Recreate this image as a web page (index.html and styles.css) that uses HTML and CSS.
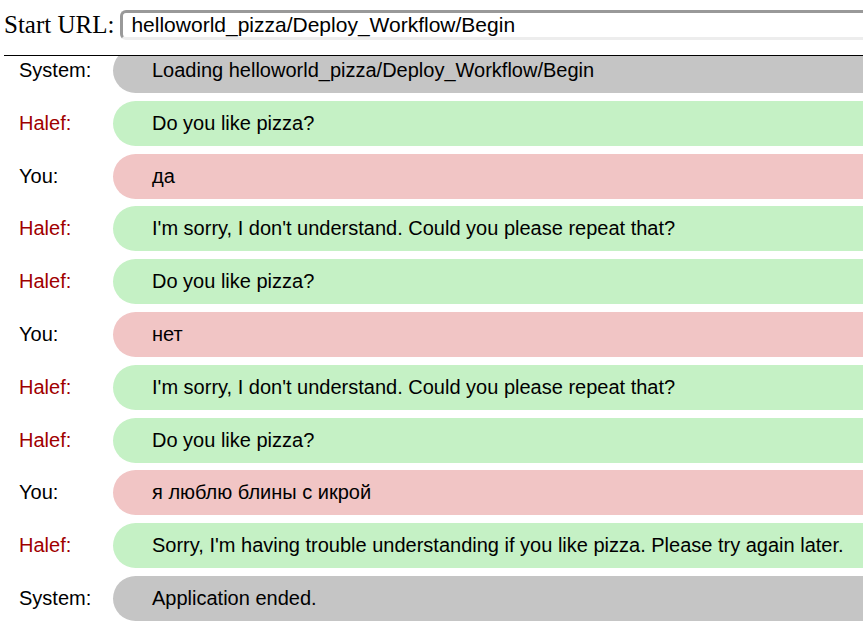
FILE: index.html
```html
<!DOCTYPE html>
<html lang="en">
<head>
<meta charset="utf-8">
<title>Halef</title>
<link rel="stylesheet" href="styles.css">
</head>
<body>
<form class="bar">
<label for="url">Start URL:</label>
<input id="url" class="url" type="text" value="helloworld_pizza/Deploy_Workflow/Begin">
</form>
<main class="log">
<div class="row system"><span class="who">System:</span><p class="msg">Loading helloworld_pizza/Deploy_Workflow/Begin</p></div>
<div class="row halef"><span class="who">Halef:</span><p class="msg">Do you like pizza?</p></div>
<div class="row you"><span class="who">You:</span><p class="msg">да</p></div>
<div class="row halef"><span class="who">Halef:</span><p class="msg">I'm sorry, I don't understand. Could you please repeat that?</p></div>
<div class="row halef"><span class="who">Halef:</span><p class="msg">Do you like pizza?</p></div>
<div class="row you"><span class="who">You:</span><p class="msg">нет</p></div>
<div class="row halef"><span class="who">Halef:</span><p class="msg">I'm sorry, I don't understand. Could you please repeat that?</p></div>
<div class="row halef"><span class="who">Halef:</span><p class="msg">Do you like pizza?</p></div>
<div class="row you"><span class="who">You:</span><p class="msg">я люблю блины с икрой</p></div>
<div class="row halef"><span class="who">Halef:</span><p class="msg">Sorry, I'm having trouble understanding if you like pizza. Please try again later.</p></div>
<div class="row system"><span class="who">System:</span><p class="msg">Application ended.</p></div>
</main>
</body>
</html>
```
FILE: styles.css
```css
* { box-sizing: border-box; }
body {
  display: flex;
  flex-direction: column;
  margin: 0;
  min-height: 100vh;
  background: #fff;
  color: #000;
  font-family: "Liberation Sans", Arial, sans-serif;
  font-size: 20px;
}
.bar {
  display: flex;
  align-items: center;
  gap: 6px;
  margin-left: 4px;
  padding: 10px 0 15px;
  border-bottom: 1px solid #000;
  font-family: "Liberation Serif", "Times New Roman", serif;
  font-size: 25px;
  line-height: 28px;
}
.url {
  flex: 1;
  min-width: 0;
  height: 30px;
  padding: 0 8px;
  border: 3px solid #ededed;
  border-top-color: #999;
  border-left-color: #999;
  border-right: 0;
  border-radius: 6px 0 0 6px;
  background: #fff;
  color: #000;
  font-family: "Liberation Sans", Arial, sans-serif;
  font-size: 21px;
  outline: none;
}
.log {
  flex: 1;
  display: flex;
  flex-direction: column;
  justify-content: space-between;
  padding-bottom: 4px;
  overflow: hidden;
}
.row {
  display: flex;
  align-items: center;
  line-height: 45px;
}
.row:first-child { margin-top: -8px; }
.who {
  flex: 0 0 113px;
  padding-left: 19px;
}
.halef .who { color: #a00000; }
.msg {
  flex: 1;
  margin: 0;
  padding-left: 39px;
  border-radius: 23px 0 0 23px;
  white-space: nowrap;
}
.system .msg { background: #c5c5c5; }
.halef .msg { background: #c5f1c5; }
.you .msg { background: #f1c5c5; }
```
